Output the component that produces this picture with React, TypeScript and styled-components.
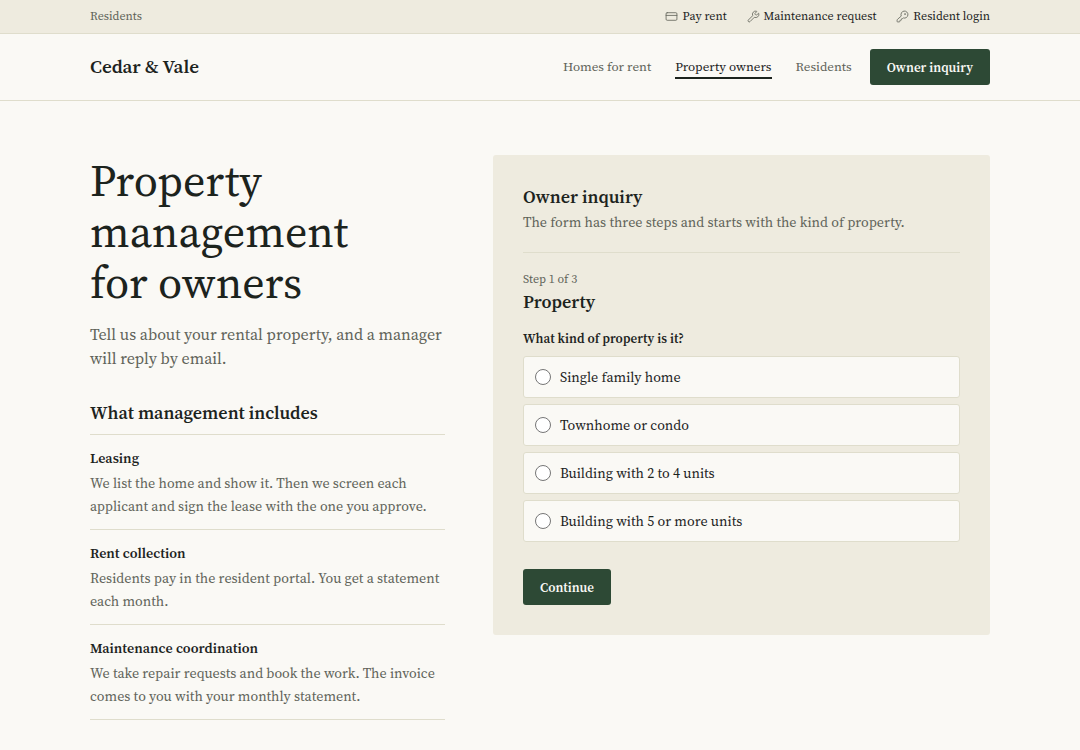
import React from "react";
import styled, { createGlobalStyle } from "styled-components";
import { CreditCard, KeyRound, Wrench } from "lucide-react";

const color = {
  page: "#faf9f5",
  sand: "#eeebdf",
  line: "#dfddcc",
  ink: "#1c231d",
  muted: "#606359",
  green: "#2d4935",
};

const GlobalStyle = createGlobalStyle`
  *, *::before, *::after { box-sizing: border-box; }
  body {
    margin: 0;
    background: ${color.page};
    color: ${color.ink};
    font-family: "Source Serif 4", "Source Serif Pro", "Liberation Serif", serif;
    font-size: 14px;
    line-height: 24px;
  }
  h1, h2, h3, p, ul, fieldset { margin: 0; padding: 0; border: 0; }
  ul { list-style: none; }
  a { color: inherit; text-decoration: none; }
`;

const Container = styled.div`
  width: calc(100% - 48px);
  max-width: 900px;
  margin: 0 auto;
`;

const UtilityBar = styled.div`
  background: ${color.sand};
  border-bottom: 1px solid ${color.line};
`;

const UtilityRow = styled(Container)`
  display: flex;
  flex-wrap: wrap;
  align-items: center;
  justify-content: space-between;
  padding: 6px 0;
  font-size: 12px;
  line-height: 21px;
`;

const UtilityLabel = styled.span`
  color: ${color.muted};
`;

const UtilityNav = styled.nav`
  display: flex;
  flex-wrap: wrap;
  gap: 20px;
`;

const UtilityLink = styled.a`
  display: inline-flex;
  align-items: center;
  gap: 4px;
  svg { color: ${color.muted}; }
`;

const Header = styled.header`
  border-bottom: 1px solid ${color.line};
`;

const HeaderRow = styled(Container)`
  display: flex;
  flex-wrap: wrap;
  align-items: center;
  justify-content: space-between;
  padding: 15px 0;
`;

const Brand = styled.a`
  padding-bottom: 2px;
  font-size: 19px;
  font-weight: 600;
`;

const MainNav = styled.nav`
  display: flex;
  flex-wrap: wrap;
  align-items: center;
  gap: 24px;
`;

const NavLink = styled.a<{ $current?: boolean }>`
  padding-top: 2px;
  font-size: 13px;
  line-height: 20px;
  color: ${(p) => (p.$current ? color.ink : color.muted)};
  border-bottom: 2px solid ${(p) => (p.$current ? color.ink : "transparent")};
`;

const Button = styled.button`
  height: 36px;
  padding: 1px 17px 0;
  border: 0;
  border-radius: 3px;
  background: ${color.green};
  color: ${color.page};
  font: inherit;
  font-size: 13px;
  font-weight: 600;
  cursor: pointer;
`;

const HeaderButton = styled(Button)`
  margin-left: -6px;
`;

const Main = styled(Container).attrs({ as: "main" })`
  display: grid;
  grid-template-columns: 5fr 7fr;
  gap: 48px;
  align-items: start;
  padding: 54px 0 30px;
  @media (max-width: 760px) {
    grid-template-columns: 1fr;
  }
`;

const Title = styled.h1`
  max-width: 300px;
  font-size: 44px;
  line-height: 51px;
  font-weight: 400;
`;

const Lead = styled.p`
  margin-top: 14px;
  color: ${color.muted};
  font-size: 16px;
  line-height: 24px;
`;

const SectionTitle = styled.h2`
  font-size: 18px;
  line-height: 24px;
  font-weight: 600;
`;

const Includes = styled.section`
  margin-top: 31px;
`;

const ServiceList = styled.ul`
  margin-top: 9px;
  border-top: 1px solid ${color.line};
`;

const Service = styled.li`
  padding: 11px 0;
  border-bottom: 1px solid ${color.line};
`;

const ServiceName = styled.h3`
  font-size: 14px;
  line-height: 24px;
  font-weight: 600;
`;

const BodyText = styled.p`
  margin-top: 2px;
  color: ${color.muted};
  font-size: 14px;
  line-height: 23px;
`;

const Panel = styled.section`
  padding: 30px;
  border-radius: 3px;
  background: ${color.sand};
`;

const PanelIntro = styled.div`
  padding-bottom: 18px;
  border-bottom: 1px solid ${color.line};
`;

const Step = styled.p`
  margin-top: 16px;
  color: ${color.muted};
  font-size: 12px;
  line-height: 21px;
`;

const Question = styled.legend`
  padding: 0 0 7px;
  font-size: 13px;
  line-height: 21px;
  font-weight: 600;
`;

const Choices = styled.fieldset`
  min-width: 0;
  margin-top: 14px;
`;

const ChoiceList = styled.div`
  display: grid;
  gap: 6px;
`;

const Choice = styled.label`
  display: flex;
  align-items: center;
  gap: 9px;
  height: 42px;
  padding: 0 11px;
  border: 1px solid ${color.line};
  border-radius: 3px;
  background: ${color.page};
  font-size: 14px;
`;

const Radio = styled.input`
  width: 16px;
  height: 16px;
  margin: 0;
  appearance: none;
  border: 1px solid #767676;
  border-radius: 50%;
  background: #fff;
  &:checked { border: 5px solid ${color.green}; }
`;

const Submit = styled(Button)`
  margin-top: 27px;
`;

const services = [
  {
    name: "Leasing",
    text: "We list the home and show it. Then we screen each applicant and sign the lease with the one you approve.",
  },
  {
    name: "Rent collection",
    text: "Residents pay in the resident portal. You get a statement each month.",
  },
  {
    name: "Maintenance coordination",
    text: "We take repair requests and book the work. The invoice comes to you with your monthly statement.",
  },
];

const kinds = [
  "Single family home",
  "Townhome or condo",
  "Building with 2 to 4 units",
  "Building with 5 or more units",
];

export default function App() {
  return (
    <>
      <GlobalStyle />
      <UtilityBar>
        <UtilityRow>
          <UtilityLabel>Residents</UtilityLabel>
          <UtilityNav aria-label="Residents">
            <UtilityLink href="#pay"><CreditCard size={13} strokeWidth={1.5} />Pay rent</UtilityLink>
            <UtilityLink href="#maintenance"><Wrench size={13} strokeWidth={1.5} />Maintenance request</UtilityLink>
            <UtilityLink href="#login"><KeyRound size={13} strokeWidth={1.5} />Resident login</UtilityLink>
          </UtilityNav>
        </UtilityRow>
      </UtilityBar>
      <Header>
        <HeaderRow>
          <Brand href="#home">Cedar &amp; Vale</Brand>
          <MainNav aria-label="Main">
            <NavLink href="#homes">Homes for rent</NavLink>
            <NavLink href="#owners" $current aria-current="page">Property owners</NavLink>
            <NavLink href="#residents">Residents</NavLink>
            <HeaderButton type="button">Owner inquiry</HeaderButton>
          </MainNav>
        </HeaderRow>
      </Header>
      <Main>
        <div>
          <Title>Property management for owners</Title>
          <Lead>Tell us about your rental property, and a manager will reply by email.</Lead>
          <Includes>
            <SectionTitle>What management includes</SectionTitle>
            <ServiceList>
              {services.map((s) => (
                <Service key={s.name}>
                  <ServiceName>{s.name}</ServiceName>
                  <BodyText>{s.text}</BodyText>
                </Service>
              ))}
            </ServiceList>
          </Includes>
        </div>
        <Panel>
          <PanelIntro>
            <SectionTitle>Owner inquiry</SectionTitle>
            <BodyText>The form has three steps and starts with the kind of property.</BodyText>
          </PanelIntro>
          <form onSubmit={(e) => e.preventDefault()}>
            <Step>Step 1 of 3</Step>
            <SectionTitle>Property</SectionTitle>
            <Choices>
              <Question>What kind of property is it?</Question>
              <ChoiceList>
                {kinds.map((k) => (
                  <Choice key={k}>
                    <Radio type="radio" name="kind" value={k} />
                    {k}
                  </Choice>
                ))}
              </ChoiceList>
            </Choices>
            <Submit type="submit">Continue</Submit>
          </form>
        </Panel>
      </Main>
    </>
  );
}
